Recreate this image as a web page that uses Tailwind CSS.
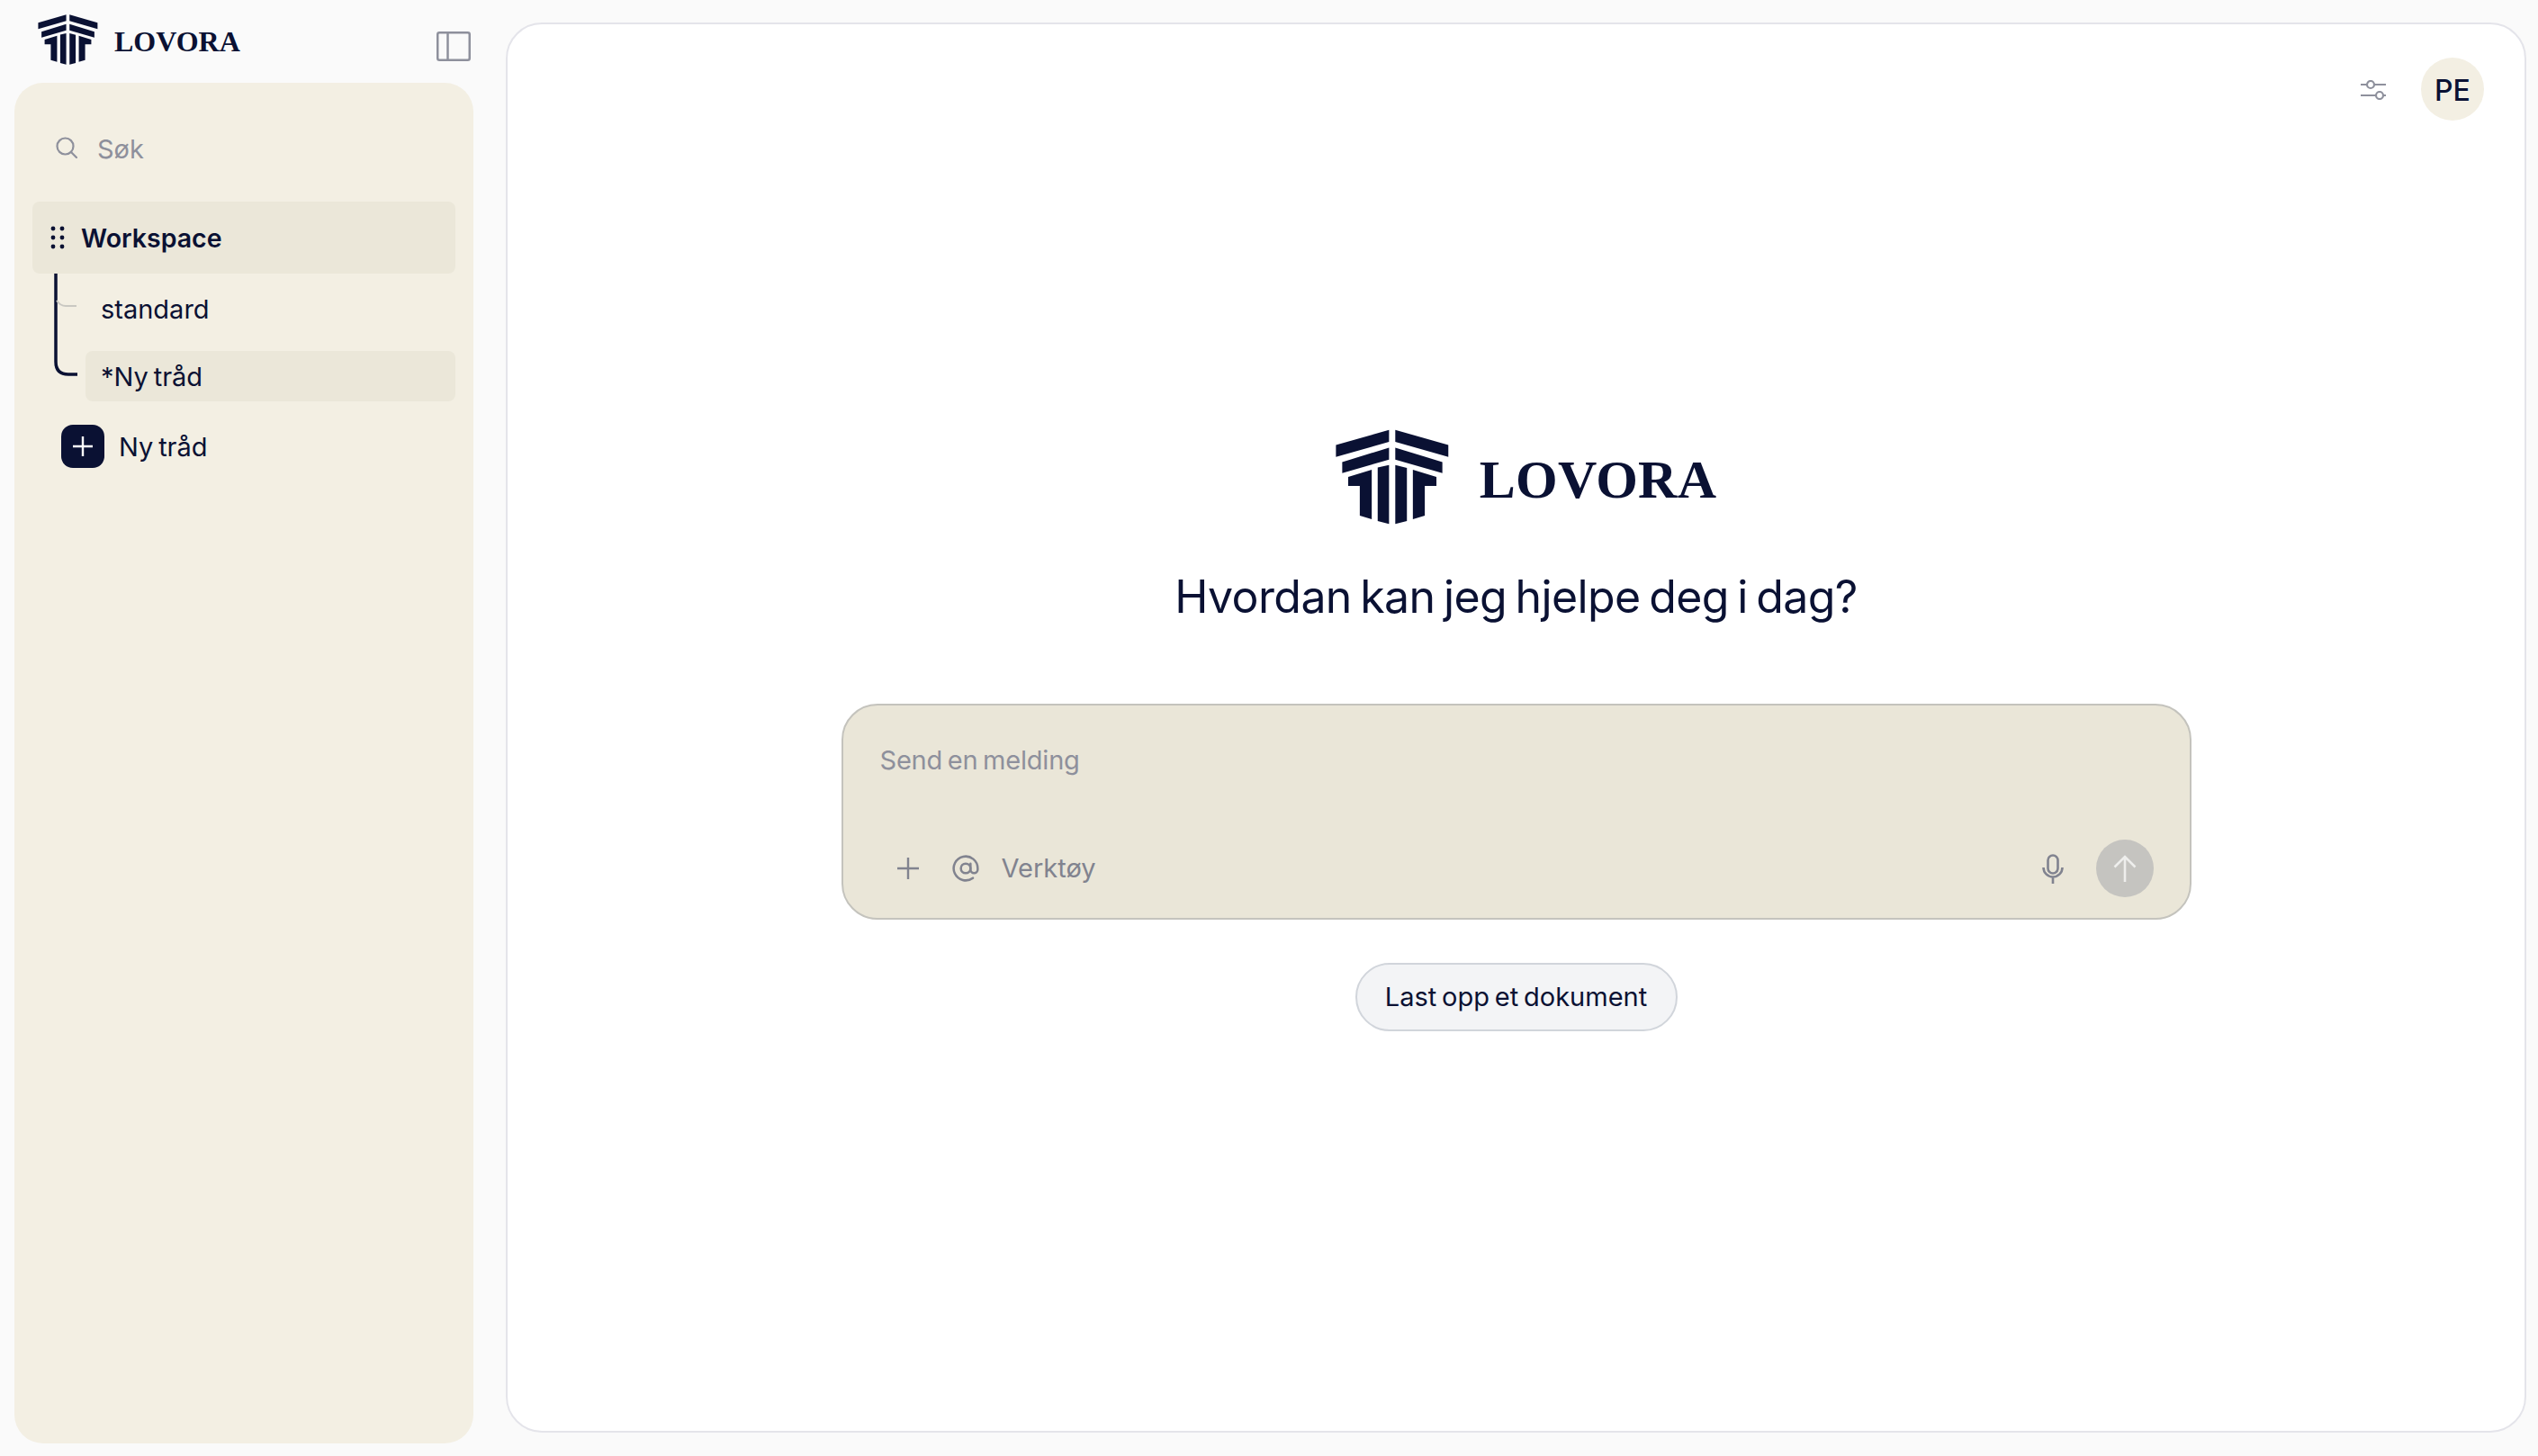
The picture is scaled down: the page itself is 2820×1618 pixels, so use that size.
<!DOCTYPE html>
<html lang="en">
<head>
    <meta charset="UTF-8">
    <title>Lovora</title>
    <script src="https://cdn.jsdelivr.net/npm/@tailwindcss/browser@4"></script>
</head>
<body class="bg-[#fafafa] text-[#0a1133] font-['Inter',sans-serif]">
<div class="flex h-[1618px] w-[2820px]">

    <!-- Sidebar -->
    <aside class="ml-4 w-[510px] flex flex-col shrink-0 h-[1604px]">
        <div class="h-[92px] shrink-0 flex items-start relative">
            <svg class="w-[67px] h-[56px] ml-[26px] mt-4" viewBox="72 50 378 320" fill="#0a1133">
                <polygon points="72,103 250,52 250,92 72,143"/><polygon points="271,52 449,103 449,143 271,92"/>
                <polygon points="93,160 250,112 250,152 93,197"/><polygon points="271,112 429,160 429,197 271,152"/>
                <polygon points="113,210 192,186 192,352 152,340 152,240 113,240"/><polygon points="212,178 250,170 250,368 212,358"/>
                <polygon points="271,170 310,180 310,358 271,368"/><polygon points="330,186 409,210 409,240 370,240 370,340 330,352"/>
            </svg>
            <span class="ml-[18px] mt-[26px] font-['Liberation_Serif',serif] font-bold text-[32px] leading-[40px]">LOVORA</span>
            <svg class="absolute left-[469px] top-[35px] w-[38px] h-[33px]" viewBox="0 0 38 33" fill="none" stroke="#8e909c" stroke-width="2.5"><rect x="1.25" y="1.25" width="35.5" height="30.5" rx="2"/><path d="M12.5 1v31"/></svg>
        </div>
        <div class="flex-1 bg-[#f3efe3] rounded-[32px] px-5 pt-[58px]">
            <div class="flex items-center h-[28px] pl-[26px] text-[#8e909c] text-[29px]">
                <svg class="w-[24px] h-[24px]" viewBox="0 0 24 24" fill="none" stroke="#8e909c" stroke-width="2.2"><circle cx="10.5" cy="10.5" r="9"/><path d="M17 17l6 6" stroke-linecap="round"/></svg>
                <span class="ml-[22px] relative top-[2px]">Søk</span>
            </div>
            <div class="mt-[46px] h-[80px] bg-[#ebe7d9] rounded-[8px] flex items-center pl-5">
                <svg class="w-[16px] h-[26px]" viewBox="0 0 16 26" fill="#0a1133"><circle cx="3" cy="3" r="2.4"/><circle cx="13" cy="3" r="2.4"/><circle cx="3" cy="13" r="2.4"/><circle cx="13" cy="13" r="2.4"/><circle cx="3" cy="23" r="2.4"/><circle cx="13" cy="23" r="2.4"/></svg>
                <span class="ml-[18px] text-[28.5px] font-semibold pt-[2px]">Workspace</span>
            </div>
            <div class="relative">
                <svg class="absolute left-[24px] top-0 w-[28px] h-[116px]" viewBox="0 0 28 116" fill="none">
                    <path d="M2 0v98q0 14 14 14h10" stroke="#0a1133" stroke-width="3.5"/>
                    <path d="M3 30q4 6 10 6h12" stroke="#c9c8c2" stroke-width="2"/>
                </svg>
                <div class="ml-[59px] h-[86px] flex items-center pl-[17px] pb-[7px] text-[29px]">standard</div>
                <div class="ml-[59px] h-[56px] bg-[#ebe7d9] rounded-[8px] flex items-center pl-[17px] pt-[2px] text-[29px] [word-spacing:-0.08em]">*Ny tråd</div>
            </div>
            <div class="mt-[26px] ml-[32px] flex items-center">
                <span class="w-[48px] h-[48px] rounded-[13px] bg-[#0a1133] flex items-center justify-center">
                    <svg class="w-[24px] h-[24px]" viewBox="0 0 24 24" stroke="#fff" stroke-width="2.4"><path d="M12 1v22M1 12h22"/></svg>
                </span>
                <span class="ml-[16px] pt-[2px] text-[29px] [word-spacing:-0.08em]">Ny tråd</span>
            </div>
        </div>
    </aside>

    <!-- Main panel -->
    <main class="ml-[36px] mt-[25px] w-[2245px] h-[1567px] bg-white border-2 border-[#e4e4ea] rounded-[40px] flex flex-col items-center">
        <div class="w-full flex justify-end items-center pt-[37px] pr-[45px]">
            <svg class="w-[28px] h-[22px] mt-[2px]" viewBox="0 0 28 22" fill="none" stroke="#8e909c" stroke-width="2.2"><path d="M0 5h6M16 5h12M0 17h16M26 17h2"/><circle cx="11" cy="5" r="4"/><circle cx="21" cy="17" r="4"/></svg>
            <div class="ml-[39px] w-[70px] h-[70px] rounded-full bg-[#f3efe3] flex items-center justify-center pt-[3px] text-[32px] font-medium">PE</div>
        </div>
        <div class="mt-[343px] ml-[22px] flex items-center">
            <svg class="w-[126px] h-[106px]" viewBox="72 50 378 320" fill="#0a1133">
                <polygon points="72,103 250,52 250,92 72,143"/><polygon points="271,52 449,103 449,143 271,92"/>
                <polygon points="93,160 250,112 250,152 93,197"/><polygon points="271,112 429,160 429,197 271,152"/>
                <polygon points="113,210 192,186 192,352 152,340 152,240 113,240"/><polygon points="212,178 250,170 250,368 212,358"/>
                <polygon points="271,170 310,180 310,358 271,368"/><polygon points="330,186 409,210 409,240 370,240 370,340 330,352"/>
            </svg>
            <span class="ml-[34px] pt-[6px] font-['Liberation_Serif',serif] font-bold text-[60px] leading-[70px] tracking-[0.2px]">LOVORA</span>
        </div>
        <h1 class="mt-[48px] text-[50px] leading-[64px] font-normal tracking-[-0.6px] [word-spacing:-0.08em]">Hvordan kan jeg hjelpe deg i dag?</h1>
        <div class="mt-[87px] w-[1500px] h-[240px] shrink-0 bg-[#eae6d8] border-2 border-[#c4c3bd] rounded-[40px] flex flex-col">
            <div class="pl-[41px] pt-[43px] text-[29px] leading-[36px] text-[#8e909c] tracking-[-0.2px] [word-spacing:-0.08em]">Send en melding</div>
            <div class="mt-auto mb-[23px] flex items-center pl-[59px] pr-[40px] h-[64px]">
                <svg class="w-[26px] h-[26px]" viewBox="0 0 26 26" stroke="#81838f" stroke-width="2.4"><path d="M13 1v24M1 13h24"/></svg>
                <svg class="ml-[35px] w-[32px] h-[32px]" viewBox="0 0 24 24" fill="none" stroke="#81838f" stroke-width="1.9" stroke-linecap="round"><circle cx="12" cy="12" r="4"/><path d="M16 8v5a3 3 0 0 0 6 0v-1a10 10 0 1 0-4 8"/></svg>
                <span class="ml-[24px] text-[29px] text-[#81838f]">Verktøy</span>
                <svg class="ml-auto w-[24px] h-[33px]" viewBox="0 0 24 33" fill="none" stroke="#81838f" stroke-width="2.6"><rect x="6.5" y="1.5" width="11" height="20" rx="5.5"/><path d="M1.5 15a10.5 10.5 0 0 0 21 0M12 26v7"/></svg>
                <span class="ml-[36px] w-[64px] h-[64px] rounded-full bg-[#c5c4c0] flex items-center justify-center">
                    <svg class="w-[26px] h-[30px]" viewBox="0 0 26 30" fill="none" stroke="#eeeeec" stroke-width="2.6"><path d="M13 30V2M1.5 13.5L13 2l11.5 11.5"/></svg>
                </span>
            </div>
        </div>
        <button class="mt-[48px] w-[358px] h-[76px] shrink-0 rounded-full bg-[#f3f4f6] border-2 border-[#d1d5db] text-[29px] [word-spacing:-0.08em]">Last opp et dokument</button>
    </main>
</div>
</body>
</html>
